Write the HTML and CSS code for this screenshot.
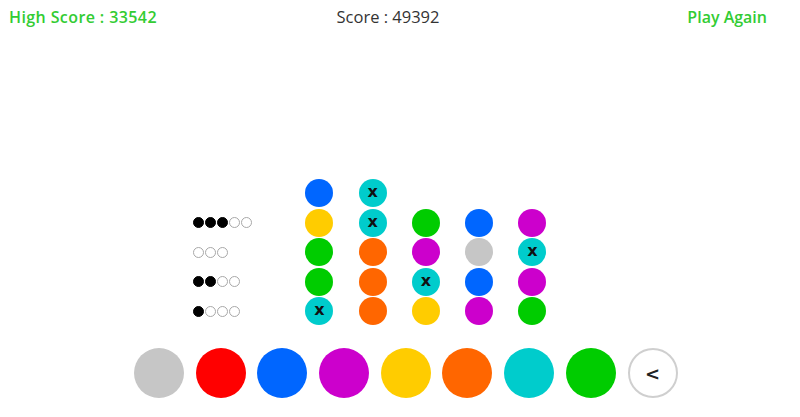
FILE: index.html
```html
<!DOCTYPE html>
<html lang="en">
<head>
    <meta charset="UTF-8">
    <meta name="viewport" content="width=device-width, initial-scale=1.0">
    <title>Mastermind</title>
    <link rel="stylesheet" href="styles.css">
</head>
<body>
    <header class="top-bar">
        <span class="high-score">High Score : 33542</span>
        <span class="score">Score : 49392</span>
        <a class="play-again" href="#">Play Again</a>
    </header>

    <div class="board">
        <!-- row 1 -->
        <div class="pegs"></div>
        <div class="dot blue"></div>
        <div class="dot cyan">x</div>
        <div></div>
        <div></div>
        <div></div>

        <!-- row 2 -->
        <div class="pegs"><i class="on"></i><i class="on"></i><i class="on"></i><i></i><i></i></div>
        <div class="dot yellow"></div>
        <div class="dot cyan">x</div>
        <div class="dot green"></div>
        <div class="dot blue"></div>
        <div class="dot magenta"></div>

        <!-- row 3 -->
        <div class="pegs"><i></i><i></i><i></i></div>
        <div class="dot green"></div>
        <div class="dot orange"></div>
        <div class="dot magenta"></div>
        <div class="dot grey"></div>
        <div class="dot cyan">x</div>

        <!-- row 4 -->
        <div class="pegs"><i class="on"></i><i class="on"></i><i></i><i></i></div>
        <div class="dot green"></div>
        <div class="dot orange"></div>
        <div class="dot cyan">x</div>
        <div class="dot blue"></div>
        <div class="dot magenta"></div>

        <!-- row 5 -->
        <div class="pegs"><i class="on"></i><i></i><i></i><i></i></div>
        <div class="dot cyan">x</div>
        <div class="dot orange"></div>
        <div class="dot yellow"></div>
        <div class="dot magenta"></div>
        <div class="dot green"></div>
    </div>

    <div class="palette">
        <button class="pick grey"></button>
        <button class="pick red"></button>
        <button class="pick blue"></button>
        <button class="pick magenta"></button>
        <button class="pick yellow"></button>
        <button class="pick orange"></button>
        <button class="pick cyan"></button>
        <button class="pick green"></button>
        <button class="pick back">&lt;</button>
    </div>
</body>
</html>
```

FILE: styles.css
```css
body {
    margin: 0;
    background-color: #fff;
    font-family: "Open Sans", "Liberation Sans", sans-serif;
    color: #333;
}

.top-bar {
    display: grid;
    grid-template-columns: 1fr auto 1fr;
    padding: 7px 33px 0 9px;
    font-size: 16px;
    font-weight: 600;
    line-height: 20px;
}

.high-score {
    color: #33cc33;
    letter-spacing: 0.4px;
}

.score {
    color: #333;
    font-weight: 400;
    font-size: 16.5px;
}

.play-again {
    justify-self: end;
    color: #33cc33;
    text-decoration: none;
}

.board {
    display: grid;
    grid-template-columns: 87px repeat(5, 28px);
    grid-auto-rows: 28px;
    column-gap: 25.3px;
    row-gap: 1.5px;
    margin-top: 152px;
    padding-left: 193px;
}

.pegs {
    display: flex;
    align-items: center;
    gap: 1px;
}

.pegs i {
    width: 9px;
    height: 9px;
    border: 1px solid #a8a8a8;
    border-radius: 50%;
    background-color: #fff;
}

.pegs i.on {
    border-color: #000;
    background-color: #000;
}

.dot {
    width: 28px;
    height: 28px;
    border-radius: 50%;
    display: flex;
    align-items: center;
    justify-content: center;
    font-family: "DejaVu Sans", sans-serif;
    font-size: 16px;
    font-weight: bold;
    line-height: 1;
    color: #111;
    padding-bottom: 2px;
    box-sizing: border-box;
}

.palette {
    display: flex;
    gap: 11.7px;
    margin-top: 23px;
    padding-left: 134px;
}

.pick {
    width: 50px;
    height: 50px;
    border: none;
    border-radius: 50%;
    padding: 0;
    cursor: pointer;
}

.pick.back {
    background-color: #fff;
    border: 2px solid #cfcfcf;
    font-family: "DejaVu Sans", sans-serif;
    font-size: 18px;
    font-weight: bold;
    color: #222;
}

.grey { background-color: #c6c6c6; }
.red { background-color: #ff0000; }
.blue { background-color: #0066ff; }
.magenta { background-color: #cc00cc; }
.yellow { background-color: #ffcc00; }
.orange { background-color: #ff6600; }
.cyan { background-color: #00cccc; }
.green { background-color: #00cc00; }
```
